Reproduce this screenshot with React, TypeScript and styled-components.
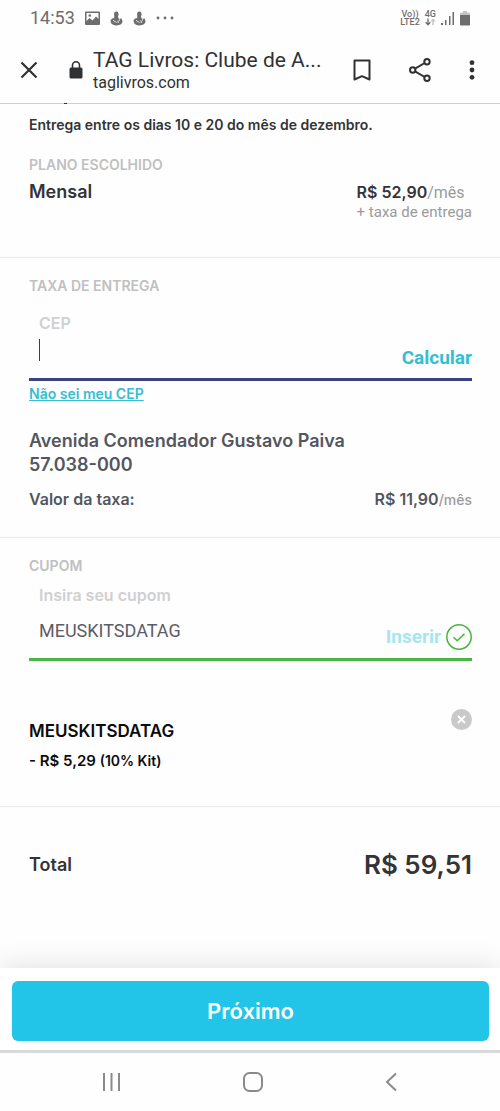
import React, { useState } from "react";
import styled, { createGlobalStyle } from "styled-components";

const GlobalStyle = createGlobalStyle`
  *, *::before, *::after { box-sizing: border-box; }
  body { margin: 0; background: #fefefe; }
  button, input { font: inherit; color: inherit; border: 0; padding: 0; margin: 0; background: none; }
  button { cursor: pointer; }
  svg { display: block; flex: none; }
  p, h1, h2, h3 { margin: 0; }
`;

const brand = `Inter, "Liberation Sans", sans-serif`;
const system = `Roboto, "Liberation Sans", sans-serif`;

const Screen = styled.div`
  min-height: 100vh;
  display: flex;
  flex-direction: column;
  background: #fefefe;
  color: #333436;
  font-family: ${brand};
`;

const StatusBar = styled.div`
  display: flex;
  align-items: center;
  justify-content: space-between;
  height: 36px;
  padding: 0 30px;
  font-family: ${system};
  color: #6d6d6d;
`;

const StatusGroup = styled.div<{ $gap: number }>`
  display: flex;
  align-items: center;
  gap: ${(p) => p.$gap}px;
`;

const Clock = styled.span`
  font-size: 18px;
  line-height: 20px;
`;

const Stack = styled.span`
  display: flex;
  flex-direction: column;
  align-items: center;
  font-size: 9px;
  line-height: 8px;
  font-weight: 500;
`;

const Toolbar = styled.header`
  position: relative;
  display: flex;
  align-items: center;
  height: 68px;
  padding: 0 25px 0 20px;
  border-bottom: 1px solid #cfcfcf;
  font-family: ${system};
  color: #2f3133;

  &::after {
    content: "";
    position: absolute;
    left: 64px;
    bottom: -1px;
    width: 3px;
    height: 1px;
    background: #333436;
  }
`;

const IconButton = styled.button`
  display: flex;
`;

const Site = styled.div`
  flex: 1;
  min-width: 0;
  display: flex;
  align-items: center;
  gap: 10px;
  padding-left: 31px;
`;

const PageTitle = styled.h1`
  font-size: 21px;
  line-height: 26px;
  font-weight: 400;
  white-space: nowrap;
`;

const PageHost = styled.p`
  font-size: 16px;
  line-height: 20px;
`;

const Actions = styled.div`
  display: flex;
  align-items: center;
  gap: 38px;
`;

const Section = styled.section<{ $top: number; $bottom: number }>`
  padding: ${(p) => p.$top}px 28px ${(p) => p.$bottom}px 29px;
  border-bottom: 1px solid #ebebeb;
`;

const Notice = styled.p`
  margin-bottom: 21px;
  font-size: 14px;
  line-height: 18px;
  font-weight: 600;
`;

const SectionLabel = styled.h2`
  font-size: 14px;
  line-height: 20px;
  font-weight: 600;
  color: #c0c0c0;
`;

const Row = styled.div<{ $top?: number }>`
  display: flex;
  justify-content: space-between;
  align-items: flex-start;
  margin-top: ${(p) => p.$top ?? 0}px;
`;

const Strong = styled.p`
  font-size: 18px;
  line-height: 22px;
  font-weight: 600;
`;

const Price = styled.p`
  font-size: 16px;
  line-height: 22px;
  font-weight: 600;
`;

const Muted = styled.span`
  font-family: ${system};
  font-weight: 400;
  color: #9b9b9b;
`;

const PerMonth = styled.span`
  font-size: 14px;
  font-weight: 500;
  color: #9b9b9b;
`;

const ExtraFee = styled.p`
  font-family: ${system};
  font-size: 15px;
  line-height: 16px;
  color: #9b9b9b;
`;

const Field = styled.div<{ $color: string; $top: number }>`
  display: flex;
  align-items: flex-end;
  justify-content: space-between;
  margin-top: ${(p) => p.$top}px;
  padding-left: 10px;
  border-bottom: 3px solid ${(p) => p.$color};
`;

const FieldBody = styled.div<{ $gap: number }>`
  flex: 1;
  min-width: 0;
  display: flex;
  flex-direction: column;
  gap: ${(p) => p.$gap}px;
  padding-bottom: 16px;
`;

const FieldLabel = styled.label`
  font-size: 16px;
  line-height: 20px;
  font-weight: 600;
  color: #d0d0d2;
`;

const InputLine = styled.div`
  display: flex;
  align-items: center;
  height: 24px;
`;

const Caret = styled.span`
  width: 1px;
  height: 22px;
  background: #3c3c46;
`;

const TextInput = styled.input`
  flex: 1;
  min-width: 0;
  height: 24px;
  outline: none;
  font-family: ${system};
  font-size: 18px;
  color: #5b5d68;
`;

const FieldAction = styled.div`
  display: flex;
  align-items: center;
  gap: 5px;
  padding-bottom: 8px;
`;

const ActionButton = styled.button`
  font-family: ${system};
  font-size: 19px;
  line-height: 24px;
  font-weight: 700;
  color: #33bfd3;

  &:disabled { color: #a5e6f2; cursor: default; }
`;

const HelpLink = styled.a`
  display: table;
  margin-top: 4px;
  font-size: 14px;
  line-height: 18px;
  font-weight: 600;
  color: #35bdd0;
`;

const Address = styled.address`
  margin-top: 26px;
  font-style: normal;
  font-size: 18px;
  line-height: 24px;
  font-weight: 600;
  color: #53565f;
`;

const FeeRow = styled(Row)`
  color: #53565f;
  font-size: 16px;
  line-height: 24px;
  font-weight: 600;
`;

const Coupon = styled.div`
  color: #0c0c0c;
`;

const CouponCode = styled.h3`
  margin-top: 12px;
  font-size: 17px;
  line-height: 20px;
  font-weight: 600;
`;

const CouponValue = styled.p`
  margin-top: 10px;
  font-size: 15px;
  line-height: 20px;
  font-weight: 600;

  small { font-size: 14px; }
`;

const TotalRow = styled.div`
  flex: 1;
  display: flex;
  align-items: flex-start;
  justify-content: space-between;
  padding: 40px 28px 84px 29px;
`;

const TotalLabel = styled.p`
  font-size: 18px;
  line-height: 36px;
  font-weight: 600;
`;

const TotalValue = styled.p`
  font-size: 26px;
  line-height: 36px;
  font-weight: 600;
`;

const Footer = styled.footer`
  padding: 13px 11px 9px 12px;
  background: #ffffff;
  border-bottom: 3px solid #d9d9d9;
  box-shadow: 0 -4px 24px rgba(0, 0, 0, 0.1);
`;

const NextButton = styled.button`
  display: block;
  width: 100%;
  height: 60px;
  border-radius: 6px;
  background: #22c5e7;
  color: #ffffff;
  font-size: 22px;
  font-weight: 600;
`;

const NavBar = styled.nav`
  position: relative;
  display: flex;
  align-items: center;
  justify-content: space-between;
  height: 58px;
  padding: 0 101px;
  background: #fefefe;
  color: #8a8a8a;
`;

const PictureIcon = () => (
  <svg width="15" height="15" viewBox="0 0 15 15">
    <path fillRule="evenodd" fill="#6d6d6d" d="M1 0.500h13a1 1 0 0 1 1 1v11.500a1 1 0 0 1-1 1H1a1 1 0 0 1-1-1V1.500a1 1 0 0 1 1-1zM1.500 2v8l3-3 3 2.500 3.500-4 2.500 2.500V2zM4.800 3.200a1.300 1.300 0 1 1 0 2.600 1.300 1.300 0 0 1 0-2.600z" />
  </svg>
);

const SwanIcon = () => (
  <svg width="13" height="15" viewBox="0 0 13 15" fill="#6d6d6d">
    <circle cx="6.300" cy="2.700" r="2.200" />
    <path d="M4.300 3L8.500 3.200 8 6l1.300 2.600-1.300 3.200H1.500L0.300 9.800 2 7.500l2.200-.6z" />
    <path d="M0.500 11.300h7.500l2-2.300-.6-1.300 2.200-.2 1 3.300c-.6 2.300-2.900 3.600-6 3.600-3 0-5.400-1-6.100-3.100z" />
    <path d="M3 9.300l3.500 2.200M7.800 9.500l.6 2.500" stroke="#fefefe" strokeWidth="0.800" />
  </svg>
);

const DotsIcon = () => (
  <svg width="18" height="4" viewBox="0 0 18 4" fill="#6d6d6d">
    <circle cx="2" cy="2" r="1.400" />
    <circle cx="9" cy="2" r="1.400" />
    <circle cx="16" cy="2" r="1.400" />
  </svg>
);

const DataArrows = () => (
  <svg width="11" height="8" viewBox="0 0 11 8" fill="none">
    <path stroke="#6d6d6d" strokeWidth="1.300" d="M3 0.500v6M0.700 4.300L3 6.700l2.300-2.400" />
    <path stroke="#ababab" d="M8 7.200V1.500M6 3.500l2-2.200 2 2.200" />
  </svg>
);

const SignalIcon = () => (
  <svg width="14" height="15" viewBox="0 0 14 15" fill="#6d6d6d">
    <rect x="0" y="12" width="2" height="2" />
    <rect x="4" y="9" width="1.500" height="5" />
    <rect x="8" y="5" width="1.500" height="9" />
    <rect x="11.500" y="1" width="1.500" height="13" />
  </svg>
);

const BatteryIcon = () => (
  <svg width="10" height="15" viewBox="0 0 10 15">
    <path fill="#c4c4c4" d="M3 0h4v1.500h2a1 1 0 0 1 1 1V5H0V2.500a1 1 0 0 1 1-1h2z" />
    <path fill="#6d6d6d" d="M0 4h10v9.500a1 1 0 0 1-1 1H1a1 1 0 0 1-1-1z" />
  </svg>
);

const CloseIcon = () => (
  <svg width="18" height="18" viewBox="0 0 18 18" stroke="#2f3133" strokeWidth="2.200">
    <path d="M1.500 1.500l15 15M16.500 1.500l-15 15" />
  </svg>
);

const LockIcon = () => (
  <svg width="14" height="18" viewBox="0 0 14 18">
    <rect x="0.500" y="6.500" width="13" height="11" rx="1.500" fill="#2f3133" />
    <path d="M3.500 7V4.300a3.500 3.500 0 0 1 7 0V7" fill="none" stroke="#2f3133" strokeWidth="1.600" />
  </svg>
);

const BookmarkIcon = () => (
  <svg width="18" height="22" viewBox="0 0 18 22" fill="none" stroke="#2f3133" strokeWidth="2">
    <path d="M1.500 1.500h15v19L9 17.200 1.500 20.500z" strokeLinejoin="round" />
  </svg>
);

const ShareIcon = () => (
  <svg width="22" height="24" viewBox="0 0 22 24" fill="none" stroke="#2f3133" strokeWidth="2">
    <circle cx="3.700" cy="12" r="2.700" />
    <circle cx="18" cy="3.700" r="2.700" />
    <circle cx="18" cy="20.300" r="2.700" />
    <path d="M6 10.600L15.700 5M6 13.400l9.700 5.600" />
  </svg>
);

const MoreIcon = () => (
  <svg width="6" height="24" viewBox="0 0 6 24" fill="#2f3133">
    <circle cx="3" cy="4.700" r="2.400" />
    <circle cx="3" cy="12" r="2.400" />
    <circle cx="3" cy="19.300" r="2.400" />
  </svg>
);

const CheckIcon = () => (
  <svg width="26" height="26" viewBox="0 0 26 26" fill="none" stroke="#46b53c">
    <circle cx="13" cy="13" r="12.200" strokeWidth="1.500" />
    <path d="M7.500 13.200l3.700 3.500 7.300-7" strokeWidth="1.500" />
  </svg>
);

const RemoveIcon = () => (
  <svg width="21" height="21" viewBox="0 0 21 21">
    <circle cx="10.500" cy="10.500" r="10.500" fill="#c9c9c9" />
    <path d="M7 7l7 7M14 7l-7 7" stroke="#ffffff" strokeWidth="1.900" />
  </svg>
);

const RecentsIcon = () => (
  <svg width="20" height="20" viewBox="0 0 20 20" stroke="currentColor" strokeWidth="2">
    <path d="M3 1v18M10.500 1v18M18 1v18" />
  </svg>
);

const HomeIcon = () => (
  <svg width="20" height="20" viewBox="0 0 20 20" fill="none" stroke="currentColor" strokeWidth="2">
    <rect x="1" y="1" width="18" height="18" rx="5.500" />
  </svg>
);

const BackIcon = () => (
  <svg width="14" height="20" viewBox="0 0 14 20" fill="none" stroke="currentColor" strokeWidth="2">
    <path d="M11 1.500L2 10l9 8.500" />
  </svg>
);

export default function App() {
  const [cep, setCep] = useState("");
  const [coupon, setCoupon] = useState("MEUSKITSDATAG");

  return (
    <Screen>
      <GlobalStyle />
      <StatusBar>
        <StatusGroup $gap={10}>
          <Clock>14:53</Clock>
          <PictureIcon />
          <SwanIcon />
          <SwanIcon />
          <DotsIcon />
        </StatusGroup>
        <StatusGroup $gap={5}>
          <Stack><span>Vo))</span><span>LTE2</span></Stack>
          <Stack><span>4G</span><DataArrows /></Stack>
          <SignalIcon />
          <BatteryIcon />
        </StatusGroup>
      </StatusBar>

      <Toolbar>
        <IconButton aria-label="Fechar"><CloseIcon /></IconButton>
        <Site>
          <LockIcon />
          <div>
            <PageTitle>TAG Livros: Clube de A...</PageTitle>
            <PageHost>taglivros.com</PageHost>
          </div>
        </Site>
        <Actions>
          <IconButton aria-label="Salvar"><BookmarkIcon /></IconButton>
          <IconButton aria-label="Compartilhar"><ShareIcon /></IconButton>
          <IconButton aria-label="Mais"><MoreIcon /></IconButton>
        </Actions>
      </Toolbar>

      <Section $top={12} $bottom={37}>
        <Notice>Entrega entre os dias 10 e 20 do mês de dezembro.</Notice>
        <SectionLabel>PLANO ESCOLHIDO</SectionLabel>
        <Row $top={6}>
          <Strong>Mensal</Strong>
          <div>
            <Price>R$ 52,90<Muted>/mês</Muted></Price>
            <ExtraFee>+ taxa de entrega</ExtraFee>
          </div>
        </Row>
      </Section>

      <Section $top={18} $bottom={25}>
        <SectionLabel>TAXA DE ENTREGA</SectionLabel>
        <Field $color="#3d4380" $top={17}>
          <FieldBody $gap={5}>
            <FieldLabel htmlFor="cep">CEP</FieldLabel>
            <InputLine>
              <Caret />
              <TextInput id="cep" value={cep} onChange={(e) => setCep(e.target.value)} />
            </InputLine>
          </FieldBody>
          <FieldAction><ActionButton>Calcular</ActionButton></FieldAction>
        </Field>
        <HelpLink href="#cep">Não sei meu CEP</HelpLink>
        <Address>Avenida Comendador Gustavo Paiva<br />57.038-000</Address>
        <FeeRow $top={10}>
          <span>Valor da taxa:</span>
          <span>R$ 11,90<PerMonth>/mês</PerMonth></span>
        </FeeRow>
      </Section>

      <Section $top={18} $bottom={35}>
        <SectionLabel>CUPOM</SectionLabel>
        <Field $color="#4bb543" $top={9}>
          <FieldBody $gap={13}>
            <FieldLabel htmlFor="cupom">Insira seu cupom</FieldLabel>
            <InputLine>
              <TextInput id="cupom" value={coupon} onChange={(e) => setCoupon(e.target.value)} />
            </InputLine>
          </FieldBody>
          <FieldAction>
            <ActionButton disabled>Inserir</ActionButton>
            <CheckIcon />
          </FieldAction>
        </Field>
        <Row $top={48}>
          <Coupon>
            <CouponCode>MEUSKITSDATAG</CouponCode>
            <CouponValue>- R$ 5,29 <small>(10% Kit)</small></CouponValue>
          </Coupon>
          <IconButton aria-label="Remover cupom"><RemoveIcon /></IconButton>
        </Row>
      </Section>

      <TotalRow>
        <TotalLabel>Total</TotalLabel>
        <TotalValue>R$ 59,51</TotalValue>
      </TotalRow>

      <Footer><NextButton>Próximo</NextButton></Footer>

      <NavBar>
        <IconButton aria-label="Recentes"><RecentsIcon /></IconButton>
        <IconButton aria-label="Início"><HomeIcon /></IconButton>
        <IconButton aria-label="Voltar"><BackIcon /></IconButton>
      </NavBar>
    </Screen>
  );
}
